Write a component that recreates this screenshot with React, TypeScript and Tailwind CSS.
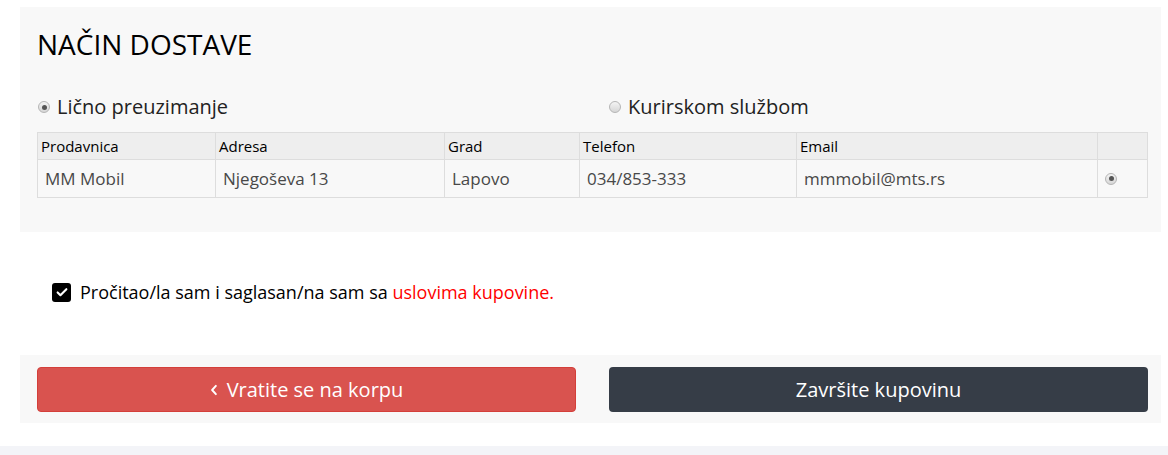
import React from "react";

const stores = [
  {
    name: "MM Mobil",
    address: "Njegoševa 13",
    city: "Lapovo",
    phone: "034/853-333",
    email: "mmmobil@mts.rs",
  },
];

function Radio({ checked }: { checked?: boolean }) {
  return (
    <span className="inline-flex h-[12px] w-[12px] shrink-0 items-center justify-center rounded-full border border-[#b5b5b5] bg-gradient-to-b from-[#f4f4f4] to-[#d6d6d6]">
      {checked ? <span className="h-[5px] w-[5px] rounded-full bg-[#555]" /> : null}
    </span>
  );
}

export default function App() {
  return (
    <div
      className="h-[455px] w-[1168px] overflow-hidden bg-white pt-[7px]"
      style={{ fontFamily: '"Open Sans", sans-serif' }}
    >
      <section className="ml-[20px] h-[225px] w-[1141px] bg-[#f8f8f8] px-[17px] pt-[20px]">
        <h2 className="text-[28px] leading-[34px] text-black">NAČIN DOSTAVE</h2>

        <div className="mt-[32px] flex items-center">
          <label className="flex w-[572px] items-center gap-[7px] pl-[1px] text-[20px] leading-[28px] text-[#222]">
            <Radio checked />
            Lično preuzimanje
          </label>
          <label className="flex items-center gap-[7px] text-[20px] leading-[28px] text-[#222]">
            <Radio />
            Kurirskom službom
          </label>
        </div>

        <table className="mt-[11px] w-[1110px] table-fixed border-collapse">
          <colgroup>
            <col className="w-[178px]" />
            <col className="w-[229px]" />
            <col className="w-[135px]" />
            <col className="w-[217px]" />
            <col className="w-[301px]" />
            <col className="w-[50px]" />
          </colgroup>
          <thead>
            <tr className="h-[27px] bg-[#eeeeee] text-left text-[15px] leading-[20px] text-black">
              <th className="border border-[#dddddd] px-[3px] font-normal">Prodavnica</th>
              <th className="border border-[#dddddd] px-[3px] font-normal">Adresa</th>
              <th className="border border-[#dddddd] px-[3px] font-normal">Grad</th>
              <th className="border border-[#dddddd] px-[3px] font-normal">Telefon</th>
              <th className="border border-[#dddddd] px-[3px] font-normal">Email</th>
              <th className="border border-[#dddddd] px-[3px] font-normal" />
            </tr>
          </thead>
          <tbody>
            {stores.map((s) => (
              <tr key={s.name} className="h-[38px] text-[17px] leading-[24px] text-[#484848]">
                <td className="border border-[#dddddd] px-[7px]">{s.name}</td>
                <td className="border border-[#dddddd] px-[7px]">{s.address}</td>
                <td className="border border-[#dddddd] px-[7px]">{s.city}</td>
                <td className="border border-[#dddddd] px-[7px]">{s.phone}</td>
                <td className="border border-[#dddddd] px-[7px]">{s.email}</td>
                <td className="border border-[#dddddd] px-[7px]">
                  <span className="flex">
                    <Radio checked />
                  </span>
                </td>
              </tr>
            ))}
          </tbody>
        </table>
      </section>

      <label className="ml-[52px] mt-[49px] flex items-center gap-[9px] text-[18px] leading-[22px] text-black">
        <span className="flex h-[19px] w-[19px] items-center justify-center rounded-[3px] bg-black">
          <svg viewBox="0 0 16 16" className="h-[14px] w-[14px]" fill="none">
            <path d="M3 8.5l3.2 3.2L13 4.8" stroke="white" strokeWidth="2.4" strokeLinecap="round" strokeLinejoin="round" />
          </svg>
        </span>
        <span>
          Pročitao/la sam i saglasan/na sam sa{" "}
          <span className="text-[#ff0000]">uslovima kupovine.</span>
        </span>
      </label>

      <div className="ml-[20px] mt-[52px] flex h-[68px] w-[1141px] gap-[33px] bg-[#f8f8f8] pl-[17px] pt-[12px]">
        <button className="flex h-[45px] w-[539px] shrink-0 items-center justify-center gap-[9px] rounded-[4px] border border-[#d43f3a] bg-[#d9534f] text-[20px] text-white">
          <svg viewBox="0 0 10 16" className="h-[12px] w-[8px]" fill="none">
            <path d="M7.5 2.5L2.5 8l5 5.5" stroke="white" strokeWidth="2.6" strokeLinecap="round" strokeLinejoin="round" />
          </svg>
          Vratite se na korpu
        </button>
        <button className="flex h-[45px] w-[539px] shrink-0 items-center justify-center rounded-[4px] bg-[#363d47] text-[20px] text-white">
          Završite kupovinu
        </button>
      </div>

      <div className="mt-[23px] h-[20px] w-full bg-[#f3f4f8]" />
    </div>
  );
}
